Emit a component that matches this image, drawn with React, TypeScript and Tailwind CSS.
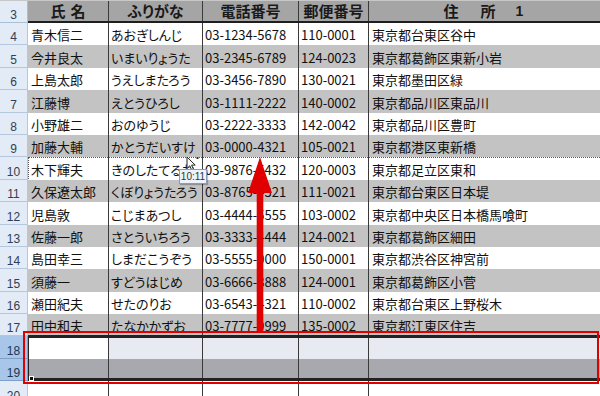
import React from 'react';

const people = [
  { n: 4, name: '青木信二', kana: 'あおぎしんじ', tel: '03-1234-5678', zip: '110-0001', addr: '東京都台東区谷中' },
  { n: 5, name: '今井良太', kana: 'いまいりょうた', tel: '03-2345-6789', zip: '124-0023', addr: '東京都葛飾区東新小岩' },
  { n: 6, name: '上島太郎', kana: 'うえしまたろう', tel: '03-3456-7890', zip: '130-0021', addr: '東京都墨田区緑' },
  { n: 7, name: '江藤博', kana: 'えとうひろし', tel: '03-1111-2222', zip: '140-0002', addr: '東京都品川区東品川' },
  { n: 8, name: '小野雄二', kana: 'おのゆうじ', tel: '03-2222-3333', zip: '142-0042', addr: '東京都品川区豊町' },
  { n: 9, name: '加藤大輔', kana: 'かとうだいすけ', tel: '03-0000-4321', zip: '105-0021', addr: '東京都港区東新橋' },
  { n: 10, name: '木下輝夫', kana: 'きのしたてるお', tel: '03-9876-5432', zip: '120-0003', addr: '東京都足立区東和' },
  { n: 11, name: '久保遼太郎', kana: 'くぼりょうたろう', tel: '03-8765-4321', zip: '111-0021', addr: '東京都台東区日本堤' },
  { n: 12, name: '児島敦', kana: 'こじまあつし', tel: '03-4444-5555', zip: '103-0002', addr: '東京都中央区日本橋馬喰町' },
  { n: 13, name: '佐藤一郎', kana: 'さとういちろう', tel: '03-3333-4444', zip: '124-0021', addr: '東京都葛飾区細田' },
  { n: 14, name: '島田幸三', kana: 'しまだこうぞう', tel: '03-5555-0000', zip: '150-0001', addr: '東京都渋谷区神宮前' },
  { n: 15, name: '須藤一', kana: 'すどうはじめ', tel: '03-6666-8888', zip: '124-0001', addr: '東京都葛飾区小菅' },
  { n: 16, name: '瀬田紀夫', kana: 'せたのりお', tel: '03-6543-4321', zip: '110-0002', addr: '東京都台東区上野桜木' },
  { n: 17, name: '田中和夫', kana: 'たなかかずお', tel: '03-7777-9999', zip: '135-0002', addr: '東京都江東区住吉' },
  { n: 18, name: '', kana: '', tel: '', zip: '', addr: '' },
  { n: 19, name: '', kana: '', tel: '', zip: '', addr: '' },
  { n: 20, name: '', kana: '', tel: '', zip: '', addr: '' },
];

const jp = "font-['Noto_Sans_CJK_JP',sans-serif] [font-feature-settings:'palt']";

function rowBg(n: number) {
  if (n === 18) return 'bg-[#e8eaf2]';
  if (n === 19) return 'bg-[#a7a9ae]';
  if (n === 20) return 'bg-white';
  return n % 2 === 0 ? 'bg-white' : 'bg-[#c3c3c3]';
}

const cell = 'h-full shrink-0 border-r border-[#3a3a3a] flex items-end pb-[2px] text-[13px] leading-[16px] text-[#111] whitespace-nowrap overflow-hidden';

export default function App() {
  return (
    <div className="relative w-[600px] h-[396px] overflow-hidden bg-white">
      {/* header row */}
      <div className={`flex h-[23px] border-t border-[#c8c8c8] ${jp}`}>
        <div className="w-[28px] shrink-0 h-full bg-[#e3ebf6] border-r border-b border-[#a9bfd6] flex items-end justify-center pb-[1px] font-['Liberation_Sans',sans-serif] text-[12px] leading-none text-[#2f3f55]">
          3
        </div>
        <div className="flex flex-1 h-full bg-[#a5a5a5] border-b-2 border-[#1e1e1e] text-[15px] font-bold text-[#1a1a1a]">
          <div className="w-[81px] shrink-0 border-r border-[#3a3a3a] flex items-center justify-center gap-[5px]">
            <span>氏</span>
            <span>名</span>
          </div>
          <div className="w-[94px] shrink-0 border-r border-[#3a3a3a] flex items-center justify-center">ふりがな</div>
          <div className="w-[96px] shrink-0 border-r border-[#3a3a3a] flex items-center justify-center">電話番号</div>
          <div className="w-[70px] shrink-0 border-r border-[#3a3a3a] flex items-center justify-center">郵便番号</div>
          <div className="flex-1 flex items-center justify-center gap-[22px] pr-[2px]">
            <span>住</span>
            <span>所</span>
            <span className="font-['Liberation_Sans',sans-serif] text-[14px] ml-[-2px]">1</span>
          </div>
        </div>
      </div>

      {/* body rows */}
      {people.map((p) => {
        const sel = p.n === 18 || p.n === 19;
        return (
          <div key={p.n} className={`flex h-[22.4px] ${jp}`}>
            <div
              className={`w-[28px] shrink-0 h-full border-r border-b flex items-end justify-center pb-[1px] font-['Liberation_Sans',sans-serif] text-[12px] leading-none ${
                sel ? 'bg-[#a8c6ea] border-[#7f9fc6] text-[#22364f]' : 'bg-[#e3ebf6] border-[#b4c7dc] text-[#2f3f55]'
              }`}
            >
              {p.n}
            </div>
            <div className={`flex flex-1 h-full ${rowBg(p.n)}`}>
              <div className={`${cell} w-[81px] pl-[3px] ${p.n === 18 ? 'bg-white' : ''}`}>{p.name}</div>
              <div className={`${cell} w-[94px] pl-[2px]`}>{p.kana}</div>
              <div className={`${cell} w-[96px] pl-[2px]`}>{p.tel}</div>
              <div className={`${cell} w-[70px] pl-[2px]`}>{p.zip}</div>
              <div className={`${cell} flex-1 pl-[3px] border-r-0`}>{p.addr}</div>
            </div>
          </div>
        );
      })}

      {/* drag insertion indicator between rows 9 and 10 */}
      <div className="absolute left-[28px] top-[157px] w-[572px] h-[22px] border-t border-l border-dotted border-[#555]" />

      {/* selection of rows 18-19 */}
      <div className="absolute left-[28px] top-[335px] w-[572px] h-[46px] border-t-[3px] border-b-[3px] border-l border-[#222]" />
      <div className="absolute left-[29px] top-[376px] w-[5px] h-[5px] bg-[#111] border border-white" />

      {/* red highlight frame */}
      <div className="absolute left-[23px] top-[331px] w-[576px] h-[53px] border-2 border-[#e00000]" />

      {/* red arrow */}
      <svg className="absolute left-[247px] top-[157px]" width="26" height="175" viewBox="0 0 26 175">
        <polygon points="13,0 25,36 16.3,36 16.3,175 9.7,175 9.7,36 1,36" fill="#e00000" />
      </svg>

      {/* mouse cursor */}
      <svg className="absolute left-[186px] top-[156px]" width="14" height="16" viewBox="0 0 14 16">
        <path d="M1 1 L1 12.5 L3.8 9.8 L5.8 14.3 L7.6 13.5 L5.6 9.1 L9.2 9.1 Z" fill="#fff" stroke="#222" strokeWidth="1" strokeLinejoin="round" />
        <rect x="10.5" y="1" width="2" height="2" fill="#333" />
      </svg>

      {/* tooltip */}
      <div className="absolute left-[179px] top-[169px] w-[28px] h-[15px] bg-[#eef3fb] border border-[#8a9bb6] shadow-[1px_1px_1px_rgba(0,0,0,0.25)] flex items-center justify-center font-['Liberation_Sans',sans-serif] text-[10px] leading-none text-[#333]">
        10:11
      </div>
    </div>
  );
}
